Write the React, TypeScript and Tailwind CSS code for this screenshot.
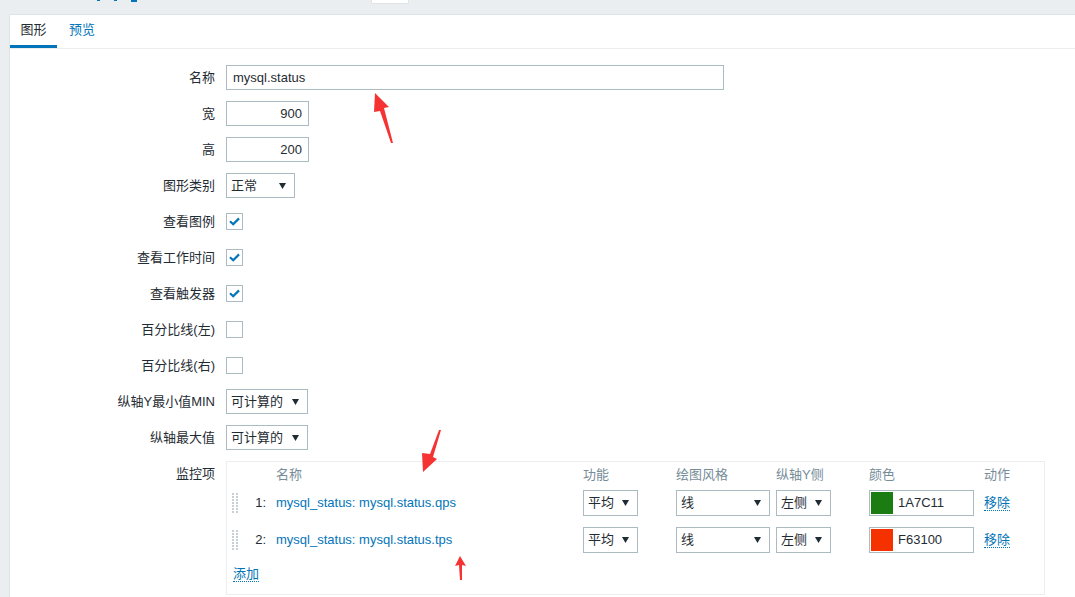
import React from 'react';

const font = { fontFamily: '"Liberation Sans", Arial, "Noto Sans CJK SC", sans-serif' };

const Arrow = () => (
  <svg width="7" height="6" viewBox="0 0 7 6" className="shrink-0">
    <polygon points="0,0 7,0 3.5,6" fill="#1f2c33" />
  </svg>
);

const Select = ({ value, w, h = 'h-[25px]' }: { value: string; w: string; h?: string }) => (
  <div className={`${w} ${h} border border-[#acbbc2] bg-white flex items-center justify-between pl-[4px] pr-[8px] text-[#1f2c33]`}>
    <span>{value}</span>
    <Arrow />
  </div>
);

const Checkbox = ({ checked }: { checked?: boolean }) => (
  <div className="w-[17px] h-[17px] border border-[#acbbc2] bg-white flex items-center justify-center">
    {checked && (
      <svg width="11" height="9" viewBox="0 0 11 9">
        <path d="M1 4.2 L4.2 7.2 L10 1.4" fill="none" stroke="#0275b8" strokeWidth="2.2" />
      </svg>
    )}
  </div>
);

const Row = ({ label, children, top }: { label: string; children: React.ReactNode; top?: boolean }) => (
  <div className={`flex ${top ? 'items-start' : 'items-center'} gap-[11px] mb-[11px]`}>
    <div className={`w-[205px] text-right text-[#1f2c33] ${top ? 'pt-[3px]' : ''}`}>{label}</div>
    <div className={top ? 'flex-1' : 'h-[25px] flex items-center'}>{children}</div>
  </div>
);

const Handle = () => (
  <svg width="7" height="20" viewBox="0 0 7 20">
    {[0, 3, 6, 9, 12, 15, 18].map((y) => (
      <g key={y}>
        <rect x="0" y={y} width="2" height="2" fill="#c6d0d5" />
        <rect x="4" y={y} width="2" height="2" fill="#c6d0d5" />
      </g>
    ))}
  </svg>
);

const items = [
  { n: '1:', name: 'mysql_status: mysql.status.qps', color: '#1A7C11', hex: '1A7C11' },
  { n: '2:', name: 'mysql_status: mysql.status.tps', color: '#F63100', hex: 'F63100' },
];

const ItemsTable = () => (
  <div className="w-[819px] h-[134px] border border-[#ebeef0] bg-white">
    <div className="flex h-[26px] items-center text-[#768d99]">
      <div className="w-[49px]" />
      <div className="w-[307px]">名称</div>
      <div className="w-[93px]">功能</div>
      <div className="w-[100px]">绘图风格</div>
      <div className="w-[93px]">纵轴Y侧</div>
      <div className="w-[115px]">颜色</div>
      <div>动作</div>
    </div>
    {items.map((it) => (
      <div key={it.n} className="flex h-[37px] items-start pt-[2px]">
        <div className="w-[21px] h-[26px] pl-[5px] flex items-center">
          <Handle />
        </div>
        <div className="w-[22px] h-[26px] pr-[4px] flex items-center justify-end text-[#1f2c33]">{it.n}</div>
        <div className="w-[6px]" />
        <div className="w-[307px] h-[26px] flex items-center text-[#0275b8]">{it.name}</div>
        <div className="w-[93px]">
          <Select value="平均" w="w-[55px]" h="h-[26px]" />
        </div>
        <div className="w-[100px]">
          <Select value="线" w="w-[94px]" h="h-[26px]" />
        </div>
        <div className="w-[93px]">
          <Select value="左侧" w="w-[55px]" h="h-[26px]" />
        </div>
        <div className="w-[115px]">
          <div className="w-[105px] h-[26px] border border-[#acbbc2] flex items-center pl-[1px] gap-[5px] text-[#1f2c33]">
            <div className="w-[22px] h-[22px]" style={{ backgroundColor: it.color }} />
            <span>{it.hex}</span>
          </div>
        </div>
        <div className="h-[26px] flex items-center">
          <span className="text-[#0275b8] border-b border-dotted border-[#0275b8] leading-[15px]">移除</span>
        </div>
      </div>
    ))}
    <div className="pl-[6px] pt-[2px]">
      <span className="text-[#0275b8] border-b border-dotted border-[#0275b8] leading-[15px]">添加</span>
    </div>
  </div>
);

export default function App() {
  return (
    <div className="w-[1075px] h-[597px] bg-[#ebeef0] overflow-hidden relative text-[13px]" style={font}>
      <div className="h-[14px] flex items-start">
        <div className="ml-[97px] flex gap-[14px]">
          <div className="w-[3px] h-[1px] bg-[#0275b8]" />
          <div className="w-[3px] h-[1px] bg-[#0275b8]" />
          <div className="w-[6px] h-[2px] bg-[#0275b8]" />
        </div>
        <div className="ml-[234px] w-[38px] h-[4px] bg-white border border-t-0 border-[#dfe4e7] rounded-b-[2px]" />
      </div>
      <div className="ml-[9px] h-[583px] bg-white border border-r-0 border-b-0 border-[#dfe4e7]">
        <div className="flex h-[34px] border-b border-[#ebeef0]">
          <div className="w-[47px] flex items-center justify-center border-b-[3px] border-[#0275b8] text-[#1f2c33]">图形</div>
          <div className="pl-[12px] pb-[3px] flex items-center text-[#0275b8]">预览</div>
        </div>
        <div className="pt-[16px]">
          <Row label="名称">
            <div className="w-[498px] h-[25px] border border-[#acbbc2] flex items-center pl-[6px] text-[#1f2c33]">mysql.status</div>
          </Row>
          <Row label="宽">
            <div className="w-[83px] h-[25px] border border-[#acbbc2] flex items-center justify-end pr-[6px] text-[#1f2c33]">900</div>
          </Row>
          <Row label="高">
            <div className="w-[83px] h-[25px] border border-[#acbbc2] flex items-center justify-end pr-[6px] text-[#1f2c33]">200</div>
          </Row>
          <Row label="图形类别">
            <Select value="正常" w="w-[69px]" />
          </Row>
          <Row label="查看图例">
            <Checkbox checked />
          </Row>
          <Row label="查看工作时间">
            <Checkbox checked />
          </Row>
          <Row label="查看触发器">
            <Checkbox checked />
          </Row>
          <Row label="百分比线(左)">
            <Checkbox />
          </Row>
          <Row label="百分比线(右)">
            <Checkbox />
          </Row>
          <Row label="纵轴Y最小值MIN">
            <Select value="可计算的" w="w-[82px]" />
          </Row>
          <Row label="纵轴最大值">
            <Select value="可计算的" w="w-[82px]" />
          </Row>
          <Row label="监控项" top>
            <ItemsTable />
          </Row>
        </div>
      </div>
      {/* annotation arrows */}
      <svg className="absolute left-0 top-0 pointer-events-none" width="1075" height="597">
        <polygon points="375,93 389,107 384,108 393,143 391,143 380,111 374,112" fill="#f63333" />
        <polygon points="441,430 433,457 437,459 423,472 422,453 430,454 439,430" fill="#f63333" />
        <polygon points="460,556 466,566 462,565 462,580 460,580 459,565 455,566" fill="#f63333" />
      </svg>
    </div>
  );
}
